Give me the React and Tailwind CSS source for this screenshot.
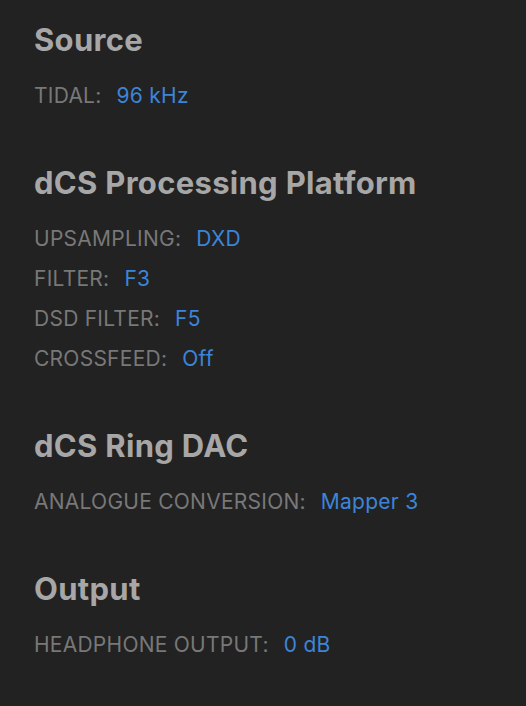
import React from "react";

const sections = [
  { title: "Source", rows: [["TIDAL:", "96 kHz"]] },
  {
    title: "dCS Processing Platform",
    rows: [
      ["UPSAMPLING:", "DXD"],
      ["FILTER:", "F3"],
      ["DSD FILTER:", "F5"],
      ["CROSSFEED:", "Off"],
    ],
  },
  { title: "dCS Ring DAC", rows: [["ANALOGUE CONVERSION:", "Mapper 3"]] },
  { title: "Output", rows: [["HEADPHONE OUTPUT:", "0 dB"]] },
];

const App = () => {
  return (
    <div
      className="min-h-[706px] w-[526px] bg-[#222222] px-[34px] pt-[22px]"
      style={{ fontFamily: "Inter, 'Noto Sans', sans-serif" }}
    >
      <div className="flex flex-col gap-[49px]">
        {sections.map((s) => (
          <div key={s.title}>
            <h2 className="flex h-9 items-center text-[31px] font-bold tracking-[0.3px] text-[#a7a7a7]">
              {s.title}
            </h2>
            <div className="mt-[18px] flex flex-col">
              {s.rows.map(([label, value]) => (
                <div key={label} className="flex h-10 items-center text-[21px] tracking-[0.25px]">
                  <span className="text-[#787878]">{label}</span>
                  <span className="ml-[15px] text-[#3c85d8]">{value}</span>
                </div>
              ))}
            </div>
          </div>
        ))}
      </div>
    </div>
  );
};

export default App;
